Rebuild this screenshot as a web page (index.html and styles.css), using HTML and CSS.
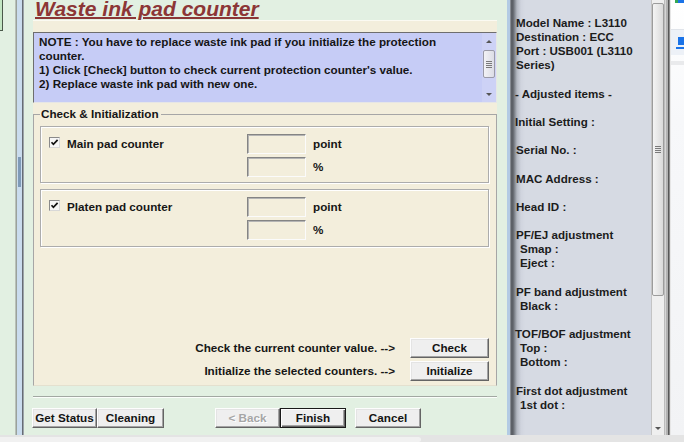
FILE: index.html
```html
<!DOCTYPE html>
<html>
<head>
<meta charset="utf-8">
<title>Waste ink pad counter</title>
<link rel="stylesheet" href="styles.css">
</head>
<body>
<div class="screen">
  <div class="window">
    <div class="left-edge"><div class="stub"></div></div>

    <div class="wizard">
      <h1 class="title">Waste ink pad counter</h1>
      <div class="panel">
        <div class="note">
          <div class="note-text">NOTE : You have to replace waste ink pad if you initialize the protection<br>counter.<br>1) Click [Check] button to check current protection counter's value.<br>2) Replace waste ink pad with new one.</div>
          <div class="mini-sb">
            <span class="arr up"></span>
            <span class="mini-thumb"><span class="grip"></span></span>
            <span class="arr down"></span>
          </div>
        </div>

        <fieldset class="group">
          <legend>Check &amp; Initialization</legend>

          <div class="counter">
            <div class="check-col">
              <span class="box"><svg width="9" height="9" viewBox="0 0 9 9"><path d="M1.5 4.2 L3.4 6.3 L7.6 1.8" fill="none" stroke="#111" stroke-width="1.7"/></svg></span>
              <span class="clabel">Main pad counter</span>
            </div>
            <div class="fields">
              <div class="field"><span class="entry"></span><span class="unit">point</span></div>
              <div class="field"><span class="entry"></span><span class="unit">%</span></div>
            </div>
          </div>

          <div class="counter second">
            <div class="check-col">
              <span class="box"><svg width="9" height="9" viewBox="0 0 9 9"><path d="M1.5 4.2 L3.4 6.3 L7.6 1.8" fill="none" stroke="#111" stroke-width="1.7"/></svg></span>
              <span class="clabel">Platen pad counter</span>
            </div>
            <div class="fields">
              <div class="field"><span class="entry"></span><span class="unit">point</span></div>
              <div class="field"><span class="entry"></span><span class="unit">%</span></div>
            </div>
          </div>

          <div class="actions">
            <div class="act-row"><span class="act-label">Check the current counter value. --&gt;</span><button class="btn act">Check</button></div>
            <div class="act-row"><span class="act-label">Initialize the selected counters. --&gt;</span><button class="btn act">Initialize</button></div>
          </div>
        </fieldset>
      </div>

      <div class="sep"></div>

      <div class="footer">
        <button class="btn w65">Get Status</button>
        <button class="btn w67">Cleaning</button>
        <button class="btn w65 disabled back">&lt; Back</button>
        <button class="btn w66 default">Finish</button>
        <button class="btn w66 cancel">Cancel</button>
      </div>
    </div>

    <div class="divider"></div>

    <div class="info">
      <div class="ln">Model Name : L3110</div>
      <div class="ln">Destination : ECC</div>
      <div class="ln">Port : USB001 (L3110</div>
      <div class="ln">Series)</div>
      <div class="ln"></div>
      <div class="ln tight">- Adjusted items -</div>
      <div class="ln"></div>
      <div class="ln tight">Initial Setting :</div>
      <div class="ln"></div>
      <div class="ln">Serial No. :</div>
      <div class="ln"></div>
      <div class="ln">MAC Address :</div>
      <div class="ln"></div>
      <div class="ln">Head ID :</div>
      <div class="ln"></div>
      <div class="ln">PF/EJ adjustment</div>
      <div class="ln ind">Smap :</div>
      <div class="ln ind">Eject :</div>
      <div class="ln"></div>
      <div class="ln">PF band adjustment</div>
      <div class="ln ind">Black :</div>
      <div class="ln"></div>
      <div class="ln tight">TOF/BOF adjustment</div>
      <div class="ln ind">Top :</div>
      <div class="ln ind">Bottom :</div>
      <div class="ln"></div>
      <div class="ln">First dot adjustment</div>
      <div class="ln ind">1st dot :</div>
    </div>

    <div class="sb">
      <span class="sb-thumb"><span class="grip"></span></span>
      <span class="arr down"></span>
    </div>

    <div class="edge"></div>

    <div class="browser">
      <div class="b-top"></div>
      <div class="b-tab">
        <svg class="b-icon" width="10" height="16" viewBox="0 0 10 16"><path d="M2 2 h8 v8 h-8 z" fill="#1a73e8"/><rect x="0" y="12" width="10" height="2" fill="#1a73e8"/></svg>
      </div>
      <div class="b-line"></div>
    </div>
  </div>
  <div class="bottom-bar"><div class="pill"></div></div>
</div>
</body>
</html>
```

FILE: styles.css
```css
* { box-sizing: border-box; }
html, body { margin: 0; padding: 0; }
body {
  width: 684px;
  height: 442px;
  overflow: hidden;
  background: #e8e8e8;
  font-family: "Liberation Sans", Arial, sans-serif;
  font-weight: bold;
  font-size: 11.7px;
  color: #161616;
}
.screen { display: flex; flex-direction: column; width: 684px; height: 442px; }
.window { display: flex; height: 435px; }

/* left strip */
.left-edge {
  width: 33px;
  flex: none;
  background:
    linear-gradient(#7f9ab8, #7f9ab8) 18px 157px / 3px 30px no-repeat,
    linear-gradient(to right, #e2f0e2 0 15px, #b9c0b9 15px 16px, #9aa29a 16px 17px, #cadcee 17px 22px, #666c74 22px 23px, #9ca4aa 23px 24px, #e2f0e2 24px);
}
.stub {
  width: 3px;
  height: 31px;
  background: #c3e6c3;
  border-right: 1px solid #4a584a;
  border-bottom: 1px solid #4a584a;
}

/* wizard */
.wizard {
  width: 474px;
  flex: none;
  display: flex;
  flex-direction: column;
  background: #e2f0e2;
  padding-right: 10px;
}
.title {
  margin: 0;
  height: 20px;
  padding: 0 0 2px 2px;
  font-size: 21px;
  line-height: 18px;
  font-style: italic;
  font-weight: bold;
  color: #8c3636;
  text-decoration: underline;
  text-decoration-thickness: 2px;
  text-underline-offset: 1px;
  white-space: nowrap;
}
.panel {
  height: 366px;
  background: #f3eedc;
  border-top: 1px solid #fbfaf2;
  padding-top: 11px;
  display: flex;
  flex-direction: column;
}
.note {
  height: 71px;
  flex: none;
  display: flex;
  background: #c6ccf6;
  border: 1px solid;
  border-color: #6e6e6e #e6e6e6 #e6e6e6 #6e6e6e;
}
.note-text {
  flex: 1;
  padding: 2px 0 0 5px;
  line-height: 14px;
  white-space: nowrap;
}
.mini-sb {
  width: 14px;
  display: flex;
  flex-direction: column;
  align-items: center;
  padding-top: 7px;
  background: #cdd2f6;
}
.arr {
  width: 0;
  height: 0;
  border-left: 3px solid transparent;
  border-right: 3px solid transparent;
}
.arr.up { border-bottom: 3px solid #555; }
.arr.down { border-top: 3px solid #555; }
.mini-sb .arr.down { margin-top: auto; margin-bottom: 6px; }
.mini-thumb {
  margin-top: 7px;
  width: 12px;
  height: 28px;
  border: 1px solid #9a9aa8;
  border-radius: 2px;
  background: linear-gradient(to right, #f2f2f6, #dcdde6);
  display: flex;
  align-items: center;
  justify-content: center;
}
.grip {
  width: 6px;
  height: 7px;
  background: repeating-linear-gradient(to bottom, #7a7a7a 0 1px, transparent 1px 2px);
}

/* group */
.group {
  margin: 4px 0 0;
  flex: 1;
  min-width: 0;
  border: 1px solid #a6a6a6;
  border-bottom-color: #e4e0cf;
  padding: 5px 7px 3px 6px;
}
.group legend {
  padding: 0 2px 0 1px;
  line-height: 14px;
}
.counter {
  height: 57px;
  border: 1px solid #acacac;
  box-shadow: inset 1px 1px 0 #fff, 1px 1px 0 #fff;
  padding: 7px 0 0 8px;
  display: flex;
  align-items: flex-start;
}
.counter.second { margin-top: 6px; height: 58px; }
.check-col {
  width: 198px;
  height: 20px;
  display: flex;
  align-items: center;
  gap: 7px;
}
.clabel { margin-bottom: 2px; }
.box {
  width: 11px;
  height: 11px;
  margin-bottom: 3px;
  border: 1px solid;
  border-color: #8a8a8a #d8d8d8 #d8d8d8 #8a8a8a;
  background: #f6f6f6;
  display: flex;
  align-items: center;
  justify-content: center;
}
.box svg { display: block; }
.fields { display: flex; flex-direction: column; gap: 3px; }
.field { display: flex; align-items: center; gap: 7px; height: 20px; }
.unit { margin-bottom: 2px; }
.entry {
  width: 59px;
  height: 20px;
  border: 1px solid;
  border-color: #848484 #fbfbfb #fbfbfb #848484;
  box-shadow: inset 1px 1px 0 #b4b4b4;
  background: #f3eedc;
}

.actions {
  margin-top: 91px;
  display: flex;
  flex-direction: column;
  gap: 3px;
}
.act-row {
  display: flex;
  justify-content: flex-end;
  align-items: center;
  gap: 15px;
}
.act-label { margin-bottom: 2px; }

/* buttons */
.btn {
  height: 20px;
  padding: 0 0 1px;
  margin: 0;
  font-family: "Liberation Sans", Arial, sans-serif;
  font-weight: bold;
  font-size: 11.7px;
  color: #141414;
  background: #efefef;
  border: 1px solid;
  border-color: #fdfdfd #646464 #646464 #fdfdfd;
  box-shadow: inset -1px -1px 0 #a3a3a3, inset 1px 1px 0 #e4e4e4;
  border-radius: 0;
  display: flex;
  align-items: center;
  justify-content: center;
  white-space: nowrap;
}
.btn.act { width: 79px; }
.w65 { width: 65px; }
.w66 { width: 66px; }
.w67 { width: 67px; }
.btn.default {
  border-color: #1a1a1a;
  box-shadow: inset 1px 1px 0 #fdfdfd, inset -1px -1px 0 #646464, inset -2px -2px 0 #a3a3a3;
}
.btn.disabled {
  color: #a6a6a6;
  text-shadow: 1px 1px 0 #fff;
}
.back { margin-left: 51px; }
.cancel { margin-left: 9px; }

.sep {
  margin-top: 10px;
  height: 2px;
  border-top: 1px solid #a2a8a2;
  border-bottom: 1px solid #fbfefb;
}
.footer {
  margin-top: 10px;
  height: 20px;
  display: flex;
  margin-left: -1px;
}

/* divider + info */
.divider {
  width: 6px;
  flex: none;
  background: linear-gradient(to right, #b3cbe4 0 3px, #868b92 3px 4px, #5d6167 4px 6px);
}
.info {
  width: 138px;
  flex: none;
  padding: 16px 0 0 3px;
  font-size: 11.6px;
  color: #1c1c1c;
  background: linear-gradient(to right, #5f6369 0, #8a8f97 2px, #b4b9c2 4px, #d0d4de 8px, #d6dae3 12px);
}
.ln { height: 14.15px; line-height: 14.15px; white-space: nowrap; }
.ln.tight { margin-left: -1px; }
.ln.ind { padding-left: 4px; }

/* right scrollbar */
.sb {
  width: 14px;
  flex: none;
  background: #efefef;
  border-left: 1px solid #c4c4c4;
  border-right: 1px solid #bcbcbc;
  padding: 3px 0 0 0;
  display: flex;
  flex-direction: column;
  align-items: center;
}
.sb-thumb {
  width: 12px;
  height: 293px;
  border: 1px solid #9c9c9c;
  border-radius: 2px;
  background: linear-gradient(to right, #f4f4f4, #dadada);
  display: flex;
  align-items: center;
  justify-content: center;
}
.sb .arr.down { margin-top: auto; margin-bottom: 5px; }

.edge {
  width: 6px;
  flex: none;
  background: linear-gradient(to right, #d6d6d6 0 1px, #b2b2b2 1px 3px, #575757 3px 4px, #8c8c8c 4px 5px, #e6e6e6 5px 6px);
}
.browser {
  width: 13px;
  flex: none;
  background: linear-gradient(to bottom, #ffffff 0, #f7f8fa 120px, #f2f3f5 435px);
  display: flex;
  flex-direction: column;
  overflow: hidden;
}
.b-top {
  height: 3px;
  margin-left: 4px;
  background: linear-gradient(to right, #34a853 0 3px, #1a73e8 3px);
}
.b-tab {
  margin-top: 26px;
  height: 26px;
  padding: 5px 0 0 5px;
  background: #edf1f7;
  border-top: 1px solid #e0e4ea;
}
.b-icon { display: block; }
.b-line {
  margin-top: 6px;
  height: 4px;
  background: #e9eaec;
}

.bottom-bar {
  height: 7px;
  background: #e4e4e4;
  padding-top: 2px;
}
.pill {
  width: 421px;
  height: 5px;
  background: #f1f1f1;
  border-radius: 0 3px 3px 0;
}
```
